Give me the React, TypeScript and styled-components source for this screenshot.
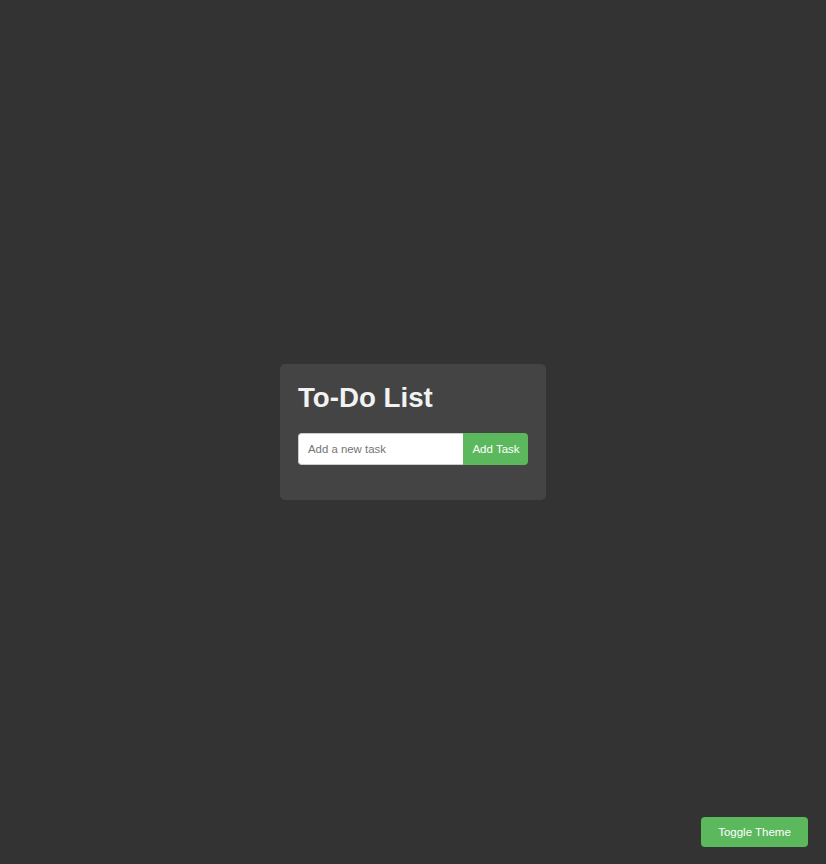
import React, { useState } from "react";
import styled, { createGlobalStyle } from "styled-components";

const GlobalStyle = createGlobalStyle`
  html, body {
    margin: 0;
    padding: 0;
    background: #333333;
    font-family: "Liberation Sans", Arial, sans-serif;
  }
`;

const Page = styled.div`
  min-height: 100vh;
  display: flex;
  align-items: center;
  justify-content: center;
  background: #333333;
`;

const Card = styled.div`
  background: #444444;
  border-radius: 5px;
  padding: 18px 18px 18px;
  display: flex;
  flex-direction: column;
`;

const Title = styled.h1`
  margin: 0 0 19px;
  font-size: 27.7px;
  font-weight: bold;
  color: #f2f2f2;
  line-height: normal;
`;

const InputRow = styled.form`
  display: flex;
  height: 32px;
`;

const TaskInput = styled.input`
  box-sizing: border-box;
  width: 165px;
  height: 32px;
  border: 1px solid #cccccc;
  border-right: none;
  border-radius: 4px 0 0 4px;
  padding: 0 9px;
  font-family: "Liberation Sans", Arial, sans-serif;
  font-size: 11.4px;
  color: #333;
  background: #ffffff;
  outline: none;
  &::placeholder {
    color: #757575;
  }
`;

const GreenButton = styled.button<{ $rounded?: "right" | "all" }>`
  box-sizing: border-box;
  border: none;
  background: #5cb85c;
  color: #ffffff;
  font-family: "Liberation Sans", Arial, sans-serif;
  font-size: 11.5px;
  cursor: pointer;
  border-radius: ${(p) => (p.$rounded === "right" ? "0 4px 4px 0" : "4px")};
`;

const AddButton = styled(GreenButton)`
  width: 65px;
  height: 32px;
  padding: 0 0 0 1px;
`;

const TaskList = styled.ul`
  list-style: none;
  margin: 17px 0 0;
  padding: 0;
`;

const ToggleButton = styled(GreenButton)`
  position: fixed;
  right: 18px;
  bottom: 17px;
  width: 107px;
  height: 30px;
  padding: 0;
`;

export default function App() {
  const [tasks, setTasks] = useState<string[]>([]);
  const [value, setValue] = useState("");
  return (
    <>
      <GlobalStyle />
      <Page>
        <Card>
          <Title>To-Do List</Title>
          <InputRow
            onSubmit={(e) => {
              e.preventDefault();
              if (value.trim()) {
                setTasks([...tasks, value.trim()]);
                setValue("");
              }
            }}
          >
            <TaskInput
              placeholder="Add a new task"
              value={value}
              onChange={(e) => setValue(e.target.value)}
            />
            <AddButton type="submit" $rounded="right">
              Add Task
            </AddButton>
          </InputRow>
          <TaskList>
            {tasks.map((t, i) => (
              <li key={i}>{t}</li>
            ))}
          </TaskList>
        </Card>
      </Page>
      <ToggleButton $rounded="all">Toggle Theme</ToggleButton>
    </>
  );
}
